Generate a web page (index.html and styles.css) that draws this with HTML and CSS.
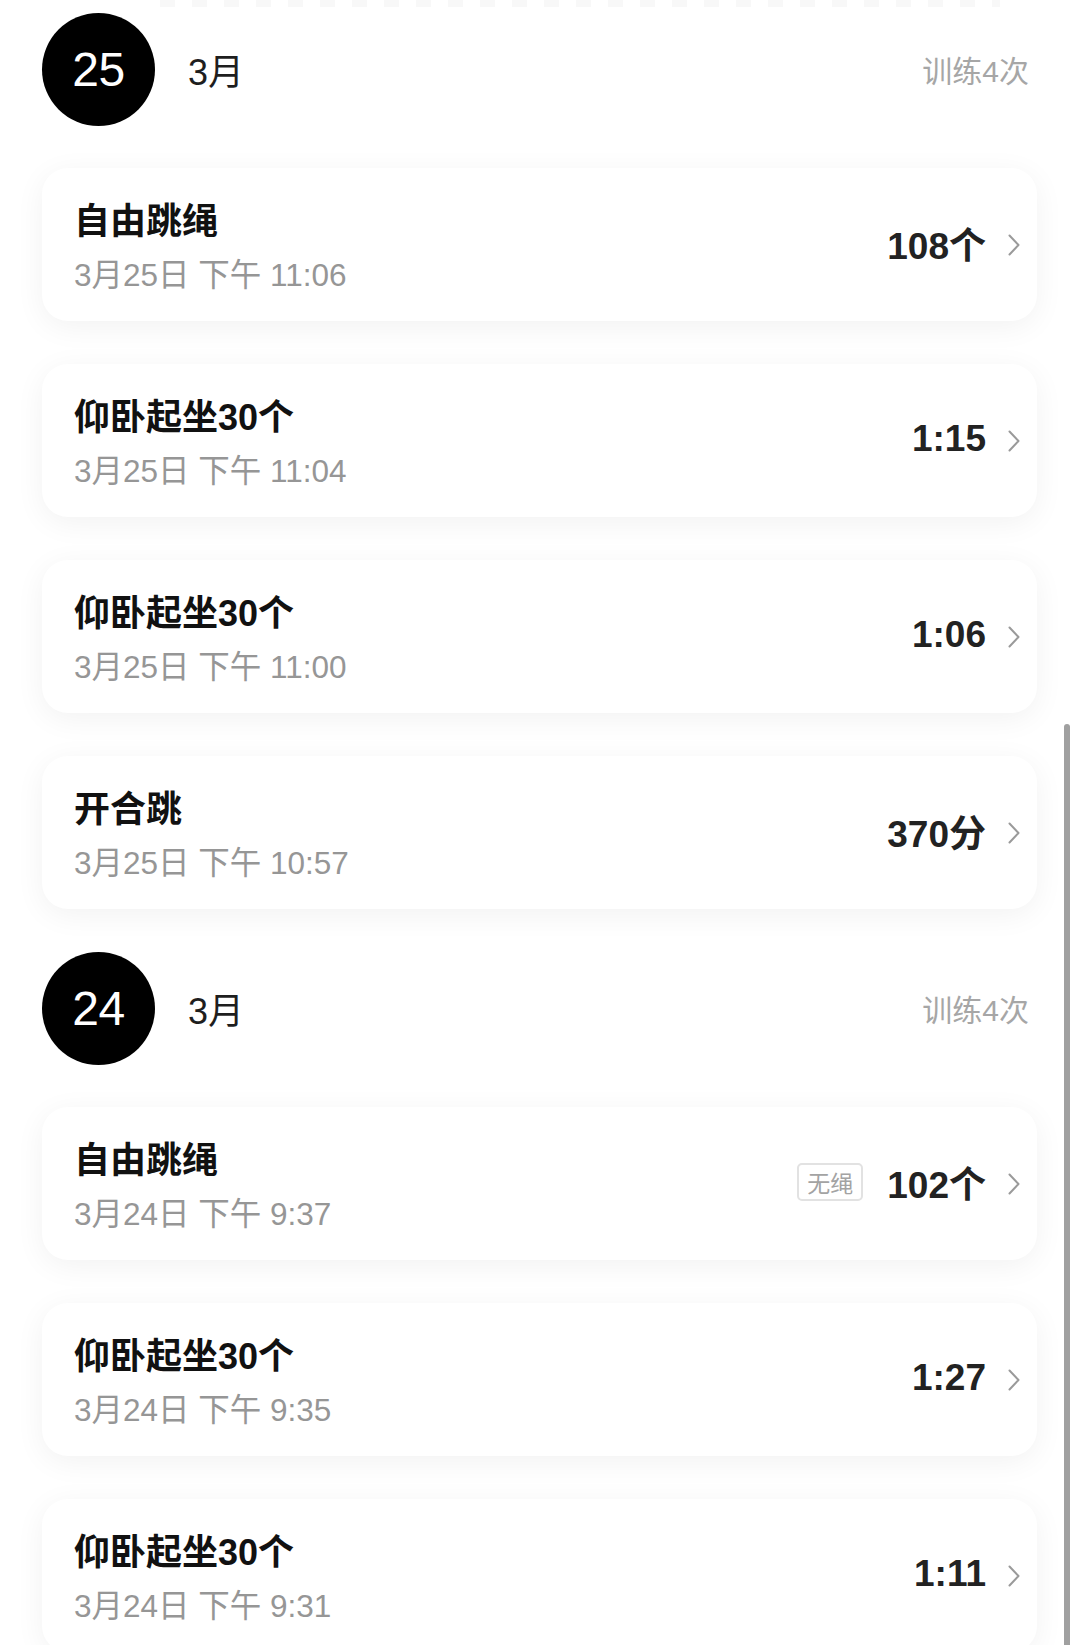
FILE: index.html
```html
<!DOCTYPE html>
<html lang="zh-CN">
<head>
<meta charset="utf-8">
<title>训练记录</title>
<link rel="stylesheet" href="styles.css">
</head>
<body>
<div class="page">
  <section class="day">
    <header class="day-head">
      <div class="day-num">25</div>
      <div class="day-month">3月</div>
      <div class="day-count">训练4次</div>
    </header>
    <div class="card">
      <div class="info"><div class="title">自由跳绳</div><div class="time">3月25日 下午 11:06</div></div>
      <div class="value">108个</div>
      <svg class="chev" viewBox="0 0 12 22"><polyline points="1.5,1.5 10.5,11 1.5,20.5"/></svg>
    </div>
    <div class="card">
      <div class="info"><div class="title">仰卧起坐30个</div><div class="time">3月25日 下午 11:04</div></div>
      <div class="value">1:15</div>
      <svg class="chev" viewBox="0 0 12 22"><polyline points="1.5,1.5 10.5,11 1.5,20.5"/></svg>
    </div>
    <div class="card">
      <div class="info"><div class="title">仰卧起坐30个</div><div class="time">3月25日 下午 11:00</div></div>
      <div class="value">1:06</div>
      <svg class="chev" viewBox="0 0 12 22"><polyline points="1.5,1.5 10.5,11 1.5,20.5"/></svg>
    </div>
    <div class="card">
      <div class="info"><div class="title">开合跳</div><div class="time">3月25日 下午 10:57</div></div>
      <div class="value">370分</div>
      <svg class="chev" viewBox="0 0 12 22"><polyline points="1.5,1.5 10.5,11 1.5,20.5"/></svg>
    </div>
  </section>
  <section class="day">
    <header class="day-head">
      <div class="day-num">24</div>
      <div class="day-month">3月</div>
      <div class="day-count">训练4次</div>
    </header>
    <div class="card">
      <div class="info"><div class="title">自由跳绳</div><div class="time">3月24日 下午 9:37</div></div>
      <span class="tag">无绳</span>
      <div class="value">102个</div>
      <svg class="chev" viewBox="0 0 12 22"><polyline points="1.5,1.5 10.5,11 1.5,20.5"/></svg>
    </div>
    <div class="card">
      <div class="info"><div class="title">仰卧起坐30个</div><div class="time">3月24日 下午 9:35</div></div>
      <div class="value">1:27</div>
      <svg class="chev" viewBox="0 0 12 22"><polyline points="1.5,1.5 10.5,11 1.5,20.5"/></svg>
    </div>
    <div class="card">
      <div class="info"><div class="title">仰卧起坐30个</div><div class="time">3月24日 下午 9:31</div></div>
      <div class="value">1:11</div>
      <svg class="chev" viewBox="0 0 12 22"><polyline points="1.5,1.5 10.5,11 1.5,20.5"/></svg>
    </div>
  </section>
  <div class="scrollbar"></div>
</div>
</body>
</html>
```

FILE: styles.css
```css
html, body {
  margin: 0;
  padding: 0;
  background: #fff;
  overflow: hidden;
  height: 1645px;
}
body {
  font-family: "Liberation Sans", "Noto Sans CJK SC", sans-serif;
  color: #111;
}
.page {
  position: relative;
  padding: 12px 43px 0 42px;
  display: flex;
  flex-direction: column;
  gap: 42px;
}
.page::before {
  content: "";
  position: absolute;
  top: 0;
  left: 160px;
  right: 80px;
  height: 7px;
  background: repeating-linear-gradient(90deg, #f8f8f8 0 15px, transparent 15px 32px);
}
.day {
  display: flex;
  flex-direction: column;
  gap: 43px;
}
.day-head {
  display: flex;
  align-items: center;
  height: 114px;
  margin-bottom: -1px;
  padding-right: 8px;
}
.day-num {
  width: 113px;
  height: 113px;
  border-radius: 50%;
  background: #000;
  color: #fff;
  font-size: 48px;
  display: flex;
  align-items: center;
  justify-content: center;
  letter-spacing: -0.5px;
}
.day-month {
  margin-left: 33px;
  font-size: 36px;
  color: #1e1e1e;
}
.day-count {
  margin-left: auto;
  font-size: 30px;
  color: #a6a6a6;
}
.card {
  height: 153px;
  box-sizing: border-box;
  background: #fff;
  border-radius: 26px;
  box-shadow: 0 6px 30px rgba(0, 0, 0, 0.055);
  display: flex;
  align-items: center;
  padding: 0 17px 0 32px;
}
.info {
  flex: 1;
  display: flex;
  flex-direction: column;
  padding-top: 7px;
}
.title {
  font-size: 36px;
  font-weight: 700;
  line-height: 48px;
  color: #111;
}
.time {
  font-size: 31.5px;
  line-height: 48px;
  margin-top: 5px;
  color: #969696;
}
.tag {
  font-size: 23px;
  color: #a3a3a3;
  border: 2px solid #e2e2e2;
  border-radius: 5px;
  height: 38px;
  box-sizing: border-box;
  padding: 0 8px;
  display: flex;
  align-items: center;
  margin-right: 24px;
  margin-bottom: 4px;
}
.value {
  font-size: 37px;
  font-weight: 700;
  color: #222;
  margin-bottom: 4px;
}
.chev {
  width: 12px;
  height: 22px;
  margin-left: 22px;
  fill: none;
  stroke: #9a9a9a;
  stroke-width: 2;
  stroke-linecap: round;
  stroke-linejoin: round;
}
.scrollbar {
  position: absolute;
  top: 724px;
  right: 10px;
  width: 6px;
  height: 960px;
  border-radius: 3px;
  background: #a0a0a0;
}
```
